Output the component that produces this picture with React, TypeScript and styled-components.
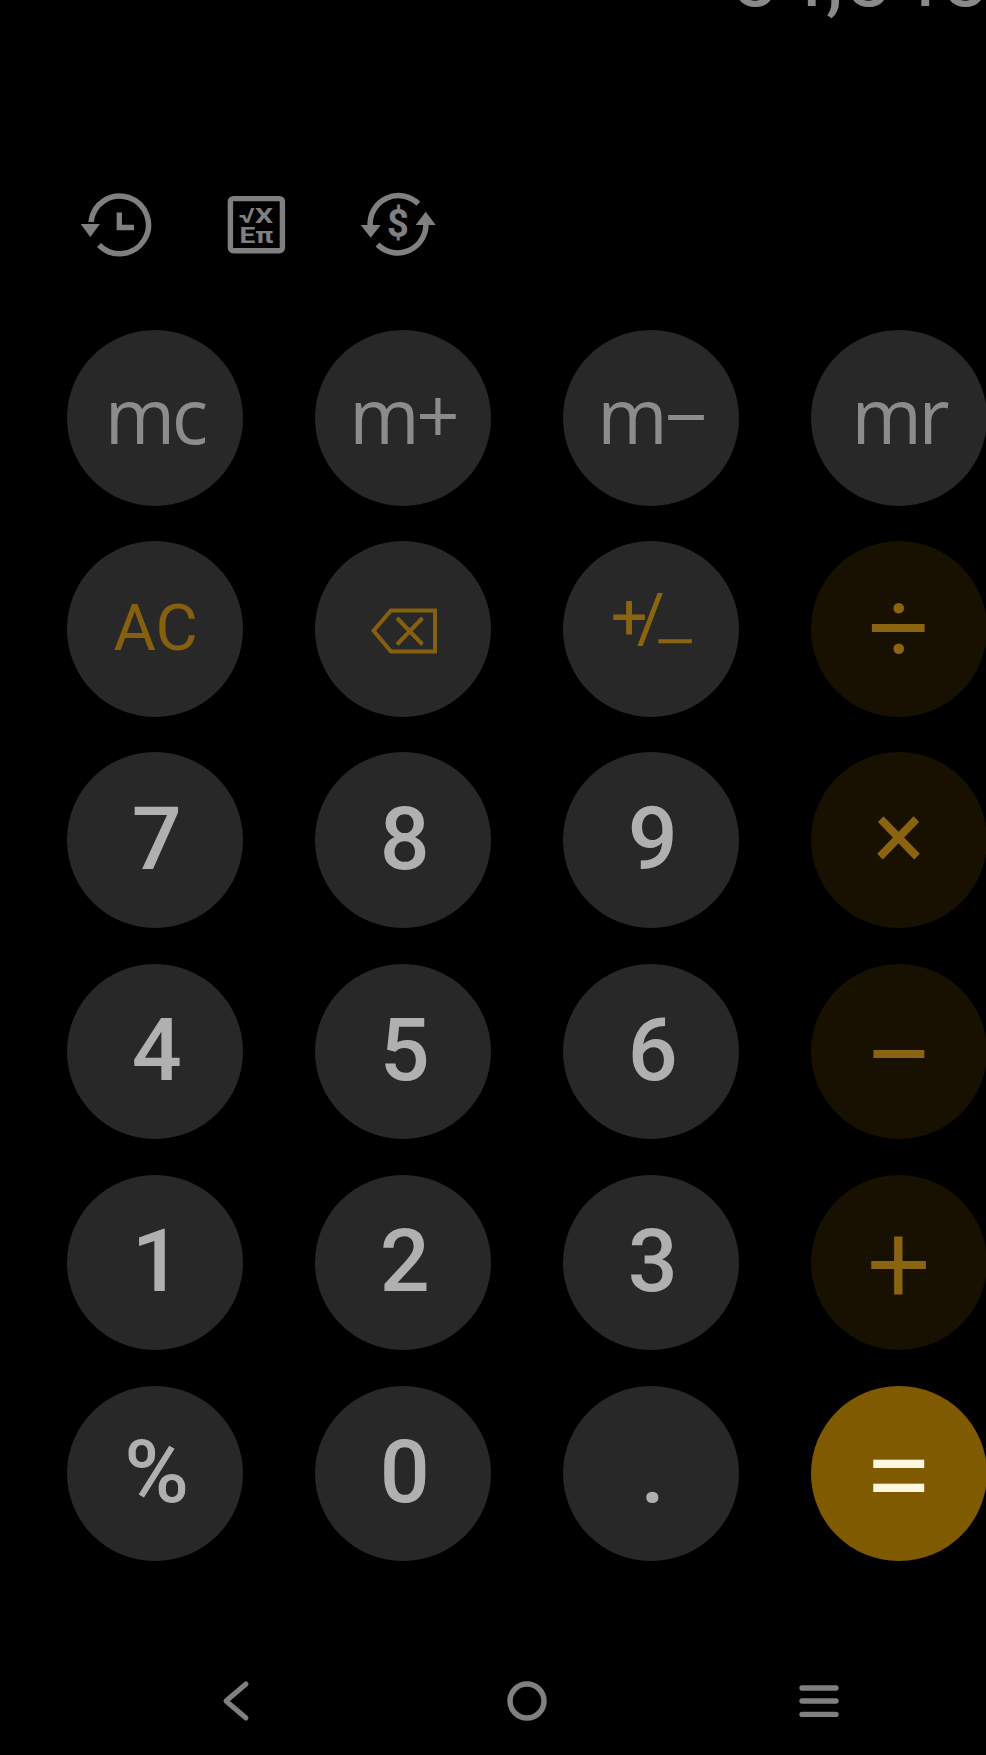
import React from "react";
import styled, { createGlobalStyle } from "styled-components";

const Global = createGlobalStyle`
  html, body { margin: 0; padding: 0; background: #000; }
  #root { width: 986px; }
`;

const Page = styled.div`
  width: 986px;
  height: 1755px;
  background: #000;
  overflow: hidden;
  display: flex;
  flex-direction: column;
  font-family: Roboto, "Liberation Sans", sans-serif;
`;

const Display = styled.div`
  height: 24px;
  display: flex;
  align-items: flex-end;
  justify-content: flex-end;
  overflow: hidden;
`;

const DisplayText = styled.div`
  font-size: 86px;
  line-height: 90px;
  font-weight: 400;
  color: #8a8a8a;
  white-space: nowrap;
  margin-bottom: 2px;
  margin-right: -2px;
`;

const Toolbar = styled.div`
  margin-top: 166px;
  height: 70px;
  padding-left: 78px;
  display: flex;
  align-items: center;
  gap: 72px;
`;

const ToolIcon = styled.svg`
  display: block;
  flex: none;
  color: #808080;
`;

const Keypad = styled.div`
  margin-top: 70px;
  padding-left: 67px;
  display: grid;
  grid-template-columns: repeat(4, 175.5px);
  grid-auto-rows: 175.5px;
  column-gap: 72.5px;
  row-gap: 35.7px;
`;

type Tone = "plain" | "op" | "equals";
const bg: Record<Tone, string> = { plain: "#282828", op: "#181000", equals: "#7f5a00" };

const Key = styled.div<{ $tone?: Tone }>`
  width: 175.5px;
  height: 175.5px;
  border-radius: 50%;
  background: ${(p) => bg[p.$tone ?? "plain"]};
  display: flex;
  align-items: center;
  justify-content: center;
`;

const MemoryLabel = styled.span`
  font-family: "Open Sans", sans-serif;
  font-size: 76px;
  line-height: 1;
  font-weight: 400;
  letter-spacing: -3.5px;
  color: #8c8c8c;
  margin-bottom: 6px;
`;

const AmberLabel = styled.span`
  font-size: 65px;
  line-height: 1;
  font-weight: 400;
  color: #86600f;
  margin-left: 2px;
`;

const Digit = styled.span`
  font-size: 88px;
  line-height: 1;
  font-weight: 500;
  color: #b0b0b0;
  margin-bottom: 3px;
  margin-left: 4px;
`;

const Operator = styled.span<{ $size: number; $lift?: number; $light?: boolean; $stroke?: number }>`
  font-size: ${(p) => p.$size}px;
  line-height: 1;
  font-weight: 300;
  color: ${(p) => (p.$light ? "#fff6e0" : "#8a6410")};
  -webkit-text-stroke: ${(p) => p.$stroke ?? 2}px currentColor;
  margin-bottom: ${(p) => Math.max(p.$lift ?? 0, 0)}px;
  margin-top: ${(p) => Math.max(-(p.$lift ?? 0), 0)}px;
`;

const Sign = styled.span`
  display: flex;
  align-items: flex-start;
  color: #8a6410;
  line-height: 1;
  margin-top: 12px;
  margin-left: 8px;
`;
const SignPlus = styled.span`
  font-size: 65px;
  font-weight: 400;
  margin-right: -11px;
`;
const SignSlash = styled.span`
  font-size: 68px;
  font-weight: 400;
`;
const SignMinus = styled.span`
  font-size: 82px;
  font-weight: 300;
  margin-top: 17px;
  margin-left: -13px;
`;

const NavBar = styled.div`
  margin-top: 110px;
  padding-left: 89px;
  display: grid;
  grid-template-columns: repeat(3, 292px);
  height: 60px;
  align-items: center;
  justify-items: center;
`;

const NavIcon = styled.svg`
  display: block;
  color: #808080;
`;

const HistoryIcon = () => (
  <ToolIcon width={76} height={70} viewBox="78 190 76 70">
    <path d="M91 222A28.8 28.8 0 1 1 99 245" fill="none" stroke="currentColor" strokeWidth={5.5} />
    <polygon points="80.7,224 100,224 90.3,237" fill="currentColor" />
    <path d="M119.3 212.5V227.5H134" fill="none" stroke="currentColor" strokeWidth={5.3} />
  </ToolIcon>
);

const ScienceIcon = () => (
  <ToolIcon width={61} height={70} viewBox="226 190 61 70">
    <rect x={230.4} y={198.6} width={52} height={52.2} rx={3} fill="none" stroke="currentColor" strokeWidth={5.4} />
    <g fill="currentColor" fontFamily="Roboto, sans-serif" fontWeight={700}>
      <text x={239} y={223} fontSize={21} textLength={34} lengthAdjust="spacingAndGlyphs">√X</text>
      <text x={239.5} y={243} fontSize={22} textLength={34} lengthAdjust="spacingAndGlyphs">Eπ</text>
    </g>
  </ToolIcon>
);

const ExchangeIcon = () => (
  <ToolIcon width={79} height={70} viewBox="360 190 79 70">
    <path d="M419.3 203.7A28.3 28.3 0 0 0 371.2 226" fill="none" stroke="currentColor" strokeWidth={5.5} />
    <polygon points="361.7,225 381.7,225 371.7,237.7" fill="currentColor" />
    <path d="M378.5 244.5A28.3 28.3 0 0 0 426.8 222" fill="none" stroke="currentColor" strokeWidth={5.5} />
    <polygon points="416.7,225 436.7,225 426.7,211.7" fill="currentColor" />
    <text x={399} y={237} fontFamily="Roboto, sans-serif" fontWeight={700} fontSize={38} textAnchor="middle" fill="currentColor">$</text>
  </ToolIcon>
);

const BackspaceIcon = () => (
  <svg width={66} height={47} viewBox="371 607.5 66 47" style={{ marginTop: 4, marginLeft: 2 }}>
    <g fill="none" stroke="#86600f" strokeWidth={4}>
      <path d="M373.5 631.2L391 611H435V652H391Z" />
      <path d="M397 618.5L422.5 645M422.5 618.5L397 645" />
    </g>
  </svg>
);

export default function App() {
  return (
    <Page>
      <Global />
      <Display>
        <DisplayText>54,545</DisplayText>
      </Display>
      <Toolbar>
        <HistoryIcon />
        <ScienceIcon />
        <ExchangeIcon />
      </Toolbar>
      <Keypad>
        <Key><MemoryLabel>mc</MemoryLabel></Key>
        <Key><MemoryLabel>m+</MemoryLabel></Key>
        <Key><MemoryLabel>m−</MemoryLabel></Key>
        <Key><MemoryLabel>mr</MemoryLabel></Key>

        <Key><AmberLabel>AC</AmberLabel></Key>
        <Key><BackspaceIcon /></Key>
        <Key>
          <Sign>
            <SignPlus>+</SignPlus>
            <SignSlash>/</SignSlash>
            <SignMinus>−</SignMinus>
          </Sign>
        </Key>
        <Key $tone="op"><Operator $size={104}>÷</Operator></Key>

        <Key><Digit>7</Digit></Key>
        <Key><Digit>8</Digit></Key>
        <Key><Digit>9</Digit></Key>
        <Key $tone="op"><Operator $size={90} $lift={16} $stroke={3}>×</Operator></Key>

        <Key><Digit>4</Digit></Key>
        <Key><Digit>5</Digit></Key>
        <Key><Digit>6</Digit></Key>
        <Key $tone="op"><Operator $size={120} $lift={-9}>−</Operator></Key>

        <Key><Digit>1</Digit></Key>
        <Key><Digit>2</Digit></Key>
        <Key><Digit>3</Digit></Key>
        <Key $tone="op"><Operator $size={108} $lift={-2}>+</Operator></Key>

        <Key><Digit>%</Digit></Key>
        <Key><Digit>0</Digit></Key>
        <Key><Digit>.</Digit></Key>
        <Key $tone="equals"><Operator $size={120} $light $lift={-2}>=</Operator></Key>
      </Keypad>
      <NavBar>
        <NavIcon width={30} height={42} viewBox="0 0 30 42">
          <path d="M26 4L6 21L26 38" fill="none" stroke="currentColor" strokeWidth={5} strokeLinecap="round" strokeLinejoin="round" />
        </NavIcon>
        <NavIcon width={40} height={40} viewBox="0 0 40 40">
          <circle cx={20} cy={20} r={17} fill="none" stroke="currentColor" strokeWidth={5.5} />
        </NavIcon>
        <NavIcon width={40} height={36} viewBox="0 0 40 36">
          <path d="M3 5H37M3 18H37M3 31.4H37" fill="none" stroke="currentColor" strokeWidth={5.3} strokeLinecap="round" />
        </NavIcon>
      </NavBar>
    </Page>
  );
}
